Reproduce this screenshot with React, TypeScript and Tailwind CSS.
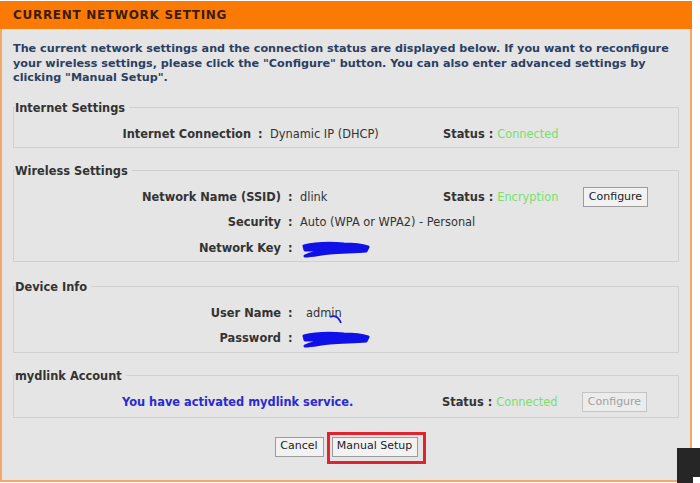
import React from 'react'

const font = { fontFamily: '"DejaVu Sans", Verdana, sans-serif' }

const StatusCell = ({ value }: { value: string }) => (
  <div className="w-[140px] flex items-center">
    <span className="font-bold text-[#333]">Status :</span>
    <span className="ml-[4px] text-[#77e06a]">{value}</span>
  </div>
)

const ConfigureButton = ({ disabled }: { disabled?: boolean }) => (
  <button
    className={
      disabled
        ? 'h-[20px] w-[65px] border border-[#c4c4c4] bg-[#ececec] text-[11px] text-[#a0a0a0]'
        : 'h-[20px] w-[65px] border border-[#9c9c9c] bg-[#f2f2f2] text-[11px] text-[#222]'
    }
  >
    Configure
  </button>
)

type RowProps = {
  label: string
  labelW: string
  colonW: string
  valueW: string
  children?: React.ReactNode
  right?: React.ReactNode
}

const Row = ({ label, labelW, colonW, valueW, children, right }: RowProps) => (
  <div className="h-[25.5px] flex items-center text-[11.4px]">
    <div className={`${labelW} text-right font-bold text-[#333]`}>{label}</div>
    <div className={`${colonW} pl-[7px] font-bold text-[#333]`}>:</div>
    <div className={`${valueW} text-[#333]`}>{children}</div>
    {right}
  </div>
)

const Scribble = () => (
  <svg width="72" height="18" viewBox="0 0 72 18" className="-mb-[3px]">
    <path
      d="M4 5 C16 2 32 2 44 3 C54 3 62 4 68 6 L66 10 C56 11 44 11 30 12 C20 13 12 15 5 15 C12 11 22 10 34 9 C24 9 12 9 5 9 Z"
      fill="#1010e8"
      stroke="#1010e8"
      strokeWidth="3"
      strokeLinejoin="round"
    />
  </svg>
)

const Section = ({ title, children, className }: { title: string; children: React.ReactNode; className?: string }) => (
  <fieldset className={`border border-[#d0d0d0] pt-[7px] ${className ?? ''}`}>
    <legend className="pr-[4px] ml-[1px] text-[11.4px] leading-[14px] font-bold text-[#333]">{title}</legend>
    {children}
  </fieldset>
)

export default function App() {
  return (
    <div className="relative w-[700px] h-[483px] bg-white overflow-hidden" style={font}>
      <div className="mt-[1px] w-[692px] h-[481px] border-x-2 border-b-2 border-[#f3a868] bg-[#e5e5e5] flex flex-col">
        <div className="-mx-[2px] h-[28px] bg-[#fb7a06] flex items-center pl-[13px]">
          <span className="text-[12px] font-bold tracking-[0.7px] text-[#3b1c04]">CURRENT NETWORK SETTING</span>
        </div>

        <div className="px-[11px]">
          <p className="mt-[13px] text-[11.2px] leading-[14.5px] font-bold text-[#2b3f63]">
            The current network settings and the connection status are displayed below. If you want to reconfigure
            your wireless settings, please click the "Configure" button. You can also enter advanced settings by
            clicking "Manual Setup".
          </p>

          <Section title="Internet Settings" className="mt-[15px]">
            <Row label="Internet Connection" labelW="w-[237px]" colonW="w-[19px]" valueW="w-[173px]" right={<StatusCell value="Connected" />}>
              Dynamic IP (DHCP)
            </Row>
          </Section>

          <Section title="Wireless Settings" className="mt-[15.5px]">
            <Row
              label="Network Name (SSID)"
              labelW="w-[267px]"
              colonW="w-[19px]"
              valueW="w-[143px]"
              right={
                <>
                  <StatusCell value="Encryption" />
                  <ConfigureButton />
                </>
              }
            >
              dlink
            </Row>
            <Row label="Security" labelW="w-[267px]" colonW="w-[19px]" valueW="w-[300px]">
              Auto (WPA or WPA2) - Personal
            </Row>
            <Row label="Network Key" labelW="w-[267px]" colonW="w-[19px]" valueW="w-[143px]">
              <Scribble />
            </Row>
          </Section>

          <Section title="Device Info" className="mt-[17.5px]">
            <Row label="User Name" labelW="w-[267px]" colonW="w-[25px]" valueW="w-[137px]">
              <span className="relative">
                admin
                <svg className="absolute left-[23px] top-[9px]" width="14" height="10" viewBox="0 0 14 10">
                  <path d="M1 2 C5 0 9 1 12 8" stroke="#1a1ae0" strokeWidth="1.8" fill="none" />
                </svg>
              </span>
            </Row>
            <Row label="Password" labelW="w-[267px]" colonW="w-[19px]" valueW="w-[143px]">
              <Scribble />
            </Row>
          </Section>

          <Section title="mydlink Account" className="mt-[16px] pb-[1.5px]">
            <div className="h-[25.5px] flex items-center text-[11.4px]">
              <div className="w-[428px] pl-[108px] font-bold text-[#2a2ad0]">You have activated mydlink service.</div>
              <StatusCell value="Connected" />
              <ConfigureButton disabled />
            </div>
          </Section>

          <div className="mt-[19px] flex justify-center gap-[8px] text-[11px] text-[#222]">
            <button className="h-[20px] w-[49px] border border-[#9c9c9c] bg-[#f2f2f2]">Cancel</button>
            <div className="relative">
              <button className="h-[20px] w-[86px] border border-[#9c9c9c] bg-[#f2f2f2]">Manual Setup</button>
              <div className="absolute -left-[5px] -top-[5px] w-[99px] h-[32px] border-[3px] border-[#e0232c]" />
            </div>
          </div>
        </div>
      </div>

      <div className="absolute left-[677px] top-[448px] w-[23px] h-[35px] bg-[#262626]">
        <div className="absolute right-0 bottom-0 w-[7px] h-[6px] bg-white" />
      </div>
    </div>
  )
}
